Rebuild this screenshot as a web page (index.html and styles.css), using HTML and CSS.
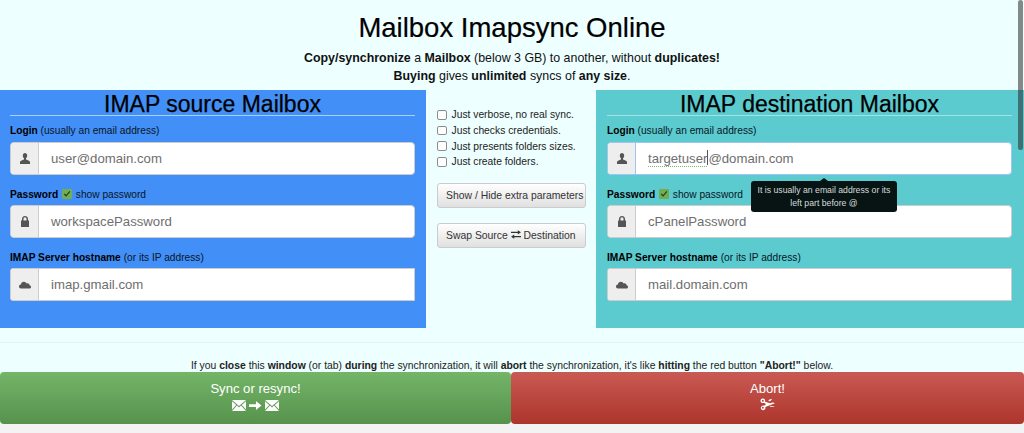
FILE: index.html
```html
<!DOCTYPE html>
<html lang="en">
  <head>
    <meta charset="UTF-8" />
    <meta name="viewport" content="width=device-width, initial-scale=1.0" />
    <title>Mailbox Imapsync Online</title>
    <link rel="stylesheet" href="styles.css">
  </head>

  <body>
    <svg class="defs" width="0" height="0">
      <symbol id="i-user" viewBox="0 0 12 12"><path d="M3.800 2.400C3.800 1 4.800 0 6 0s2.200 1 2.200 2.400c0 1.200-.5 2.300-1.200 2.900v1c0 .6 4 1.100 4 3V11H1V9.300c0-1.900 4-2.400 4-3v-1C4.300 4.700 3.800 3.600 3.800 2.400z"/></symbol>
      <symbol id="i-lock" viewBox="0 0 12 12"><path d="M6 0C4 0 3 1.400 3 3v1.600H2v6.400h8V4.600H9V3C9 1.400 8 0 6 0zm0 1.300c1 0 1.500.7 1.500 1.700v1.600h-3V3c0-1 .5-1.700 1.500-1.700z"/></symbol>
      <symbol id="i-cloud" viewBox="0 0 12 12"><path d="M1.900 9.500C.8 9.500 0 8.600 0 7.500s.8-1.900 1.800-2C2.100 4 3.300 2.800 4.900 2.800c1.200 0 2.200.7 2.700 1.700.3-.1.600-.2.900-.2 1.100 0 2 .8 2.100 1.900.8.200 1.400.9 1.400 1.700 0 1-.8 1.600-1.700 1.600z"/></symbol>
      <symbol id="i-mail" viewBox="0 0 14 11"><path d="M0 0h14L7 6zM0 1.300V9.400l4.200-4.500zM14 1.300V9.400L9.800 4.900zM5 5.600l2 1.800 2-1.800 5 5.400H0z"/></symbol>
      <symbol id="i-arrow" viewBox="0 0 14 12"><path d="M0 4.500h7.500V1L13.500 6l-6 5V7.500H0z"/></symbol>
      <symbol id="i-cut" viewBox="0 0 16 14"><path fill-rule="evenodd" d="M3 .5a2.500 2.500 0 1 0 1.300 4.600L6.500 6.600 4.300 8.400A2.500 2.500 0 1 0 5.600 9.700L16 5.600c-1.500-.9-3.300-.8-5 0L5.300 4A2.500 2.500 0 0 0 3 .5zm0 1.500a1 1 0 1 1 0 2 1 1 0 0 1 0-2zm0 7.500a1 1 0 1 1 0 2 1 1 0 0 1 0-2z"/><path d="M9.500 2L13 .8 11 3.500 9 3.200zM10.500 8.300l5.500.8c-1.500.7-3.500.7-5.500 0z"/></symbol>
      <symbol id="i-swap" viewBox="0 0 14 12"><path d="M9.500 0L14 3 9.500 6V4H0V2h9.500zM4.500 6v2H14v2H4.500v2L0 9z"/></symbol>
      <symbol id="i-check" viewBox="0 0 10 10"><path d="M1.800 5.300l.9-.9 1.400 1.500L7.500 2l.8.700-4.200 5z"/></symbol>
    </svg>

    <div class="head">
      <h1 class="title">Mailbox Imapsync Online</h1>
      <p class="intro"><b>Copy/synchronize</b> a <b>Mailbox</b> (below 3 GB) to another, without <b>duplicates!</b><br /><b>Buying</b> gives <b>unlimited</b> syncs of <b>any size</b>.</p>
    </div>

    <div class="columns">
      <div class="panel source">
        <h2 class="panel-title">IMAP source Mailbox</h2>

        <label class="lbl first"><b>Login</b> (usually an email address)</label>
        <div class="group">
          <span class="addon"><svg class="ico"><use href="#i-user"/></svg></span>
          <input class="field" type="text" value="user@domain.com" />
        </div>

        <label class="lbl"><b>Password</b> <span class="tick"><svg><use href="#i-check"/></svg></span> show password</label>
        <div class="group">
          <span class="addon"><svg class="ico"><use href="#i-lock"/></svg></span>
          <input class="field" type="text" value="workspacePassword" />
        </div>

        <label class="lbl"><b>IMAP Server hostname</b> (or its IP address)</label>
        <div class="group square">
          <span class="addon"><svg class="ico"><use href="#i-cloud"/></svg></span>
          <input class="field" type="text" value="imap.gmail.com" />
        </div>
      </div>

      <div class="middle">
        <label class="opt"><input type="checkbox" /> Just verbose, no real sync.</label>
        <label class="opt"><input type="checkbox" /> Just checks credentials.</label>
        <label class="opt"><input type="checkbox" /> Just presents folders sizes.</label>
        <label class="opt"><input type="checkbox" /> Just create folders.</label>
        <button class="btn btn-first">Show / Hide extra parameters</button>
        <button class="btn">Swap Source <svg class="swap"><use href="#i-swap"/></svg> Destination</button>
      </div>

      <div class="panel dest">
        <h2 class="panel-title">IMAP destination Mailbox</h2>

        <label class="lbl first"><b>Login</b> (usually an email address)</label>
        <div class="group focused">
          <span class="addon"><svg class="ico"><use href="#i-user"/></svg></span>
          <div class="field"><span class="typo">targetuser</span><span class="caret"></span>@domain.com</div>
          <div class="tooltip">It is usually an email address or its left part before @</div>
        </div>

        <label class="lbl"><b>Password</b> <span class="tick"><svg><use href="#i-check"/></svg></span> show password</label>
        <div class="group">
          <span class="addon"><svg class="ico"><use href="#i-lock"/></svg></span>
          <input class="field" type="text" value="cPanelPassword" />
        </div>

        <label class="lbl"><b>IMAP Server hostname</b> (or its IP address)</label>
        <div class="group square">
          <span class="addon"><svg class="ico"><use href="#i-cloud"/></svg></span>
          <input class="field" type="text" value="mail.domain.com" />
        </div>
      </div>
    </div>

    <hr class="rule" />

    <p class="warning">If you <b>close</b> this <b>window</b> (or tab) <b>during</b> the synchronization, it will <b>abort</b> the synchronization, it's like <b>hitting</b> the red button <b>"Abort!"</b> below.</p>

    <div class="actions">
      <button class="action sync">Sync or resync!<br /><span class="glyphs"><svg class="mail"><use href="#i-mail"/></svg><svg class="arrow"><use href="#i-arrow"/></svg><svg class="mail"><use href="#i-mail"/></svg></span></button>
      <button class="action abort">Abort!<br /><span class="glyphs"><svg class="cut"><use href="#i-cut"/></svg></span></button>
    </div>

    <div class="scrollthumb"></div>
  </body>
</html>
```

FILE: styles.css
```css
* {
  box-sizing: border-box;
}

html, body {
  overflow: hidden;
}

body {
  margin: 0;
  height: 433px;
  background-color: #f3f3f3;
  font-family: "Liberation Sans", Arial, sans-serif;
  font-size: 11px;
  color: #111;
  position: relative;
}

.defs {
  position: absolute;
}

.head {
  background-color: #edffff;
  height: 90px;
  text-align: center;
  padding-top: 12px;
}

.title {
  margin: 0;
  font-size: 27.500px;
  font-weight: normal;
  line-height: 31px;
  color: #000;
  -webkit-text-stroke: 0.2px #000;
}

.intro {
  margin: 6px 0 0;
  font-size: 12.400px;
  line-height: 18px;
}

.columns {
  display: grid;
  grid-template-columns: 426px 170px 428px;
  height: 238px;
  background-color: #edffff;
}

.panel {
  padding: 0 11px 0 10px;
}

.source {
  background-color: #428ff7;
}

.dest {
  background-color: #5bcbd0;
  padding: 0 12px 0 11px;
}

.panel-title {
  margin: 0;
  height: 26px;
  font-size: 23px;
  line-height: 28px;
  font-weight: normal;
  text-align: center;
  color: #000;
  border-bottom: 1px solid #a9d0fb;
  -webkit-text-stroke: 0.25px #000;
}

.dest .panel-title {
  border-bottom-color: #a5e2e6;
}

.lbl {
  display: block;
  height: 15px;
  margin-top: 12px;
  margin-bottom: 3px;
  font-size: 10.200px;
  line-height: 15px;
  color: #0a1626;
}

.lbl b {
  color: #000;
}

.lbl.first {
  margin-top: 7px;
  margin-bottom: 4px;
}

.tick {
  display: inline-block;
  width: 10px;
  height: 10px;
  margin: 0 1px;
  vertical-align: -1px;
  background-color: #74ac52;
  border-radius: 1px;
}

.tick svg {
  display: block;
  width: 10px;
  height: 10px;
  fill: #1e3d1a;
}

.group {
  display: flex;
  height: 33px;
  position: relative;
  border: 1px solid #ccc;
  border-radius: 4px;
  background: #fff;
}

.group.square {
  border-radius: 3px 0 0 3px;
}

.group.focused {
  border-color: #9ec6ee;
}

.addon {
  display: flex;
  flex: 0 0 28px;
  align-items: center;
  justify-content: center;
  background-color: #eee;
  border-right: 1px solid #ccc;
  border-radius: 3px 0 0 3px;
}

.focused .addon {
  border-right-color: #9ec6ee;
}

.ico {
  width: 12px;
  height: 12px;
  fill: #555;
}

.field {
  flex: 1;
  min-width: 0;
  border: none;
  outline: none;
  background: transparent;
  padding: 0 12px;
  font-family: inherit;
  font-size: 13.200px;
  color: #6e6e6e;
  line-height: 31px;
}

.typo {
  border-bottom: 1px dotted #6fbf6a;
}

.caret {
  display: inline-block;
  width: 1px;
  height: 15px;
  background-color: #555;
  vertical-align: -2px;
}

.tooltip {
  position: absolute;
  z-index: 2;
  left: 143px;
  top: 38px;
  width: 146px;
  padding: 3px 5px 3px;
  background-color: #071413;
  border-radius: 3px;
  color: #d5dcdc;
  font-size: 8.700px;
  line-height: 12.500px;
  text-align: center;
}

.tooltip::before {
  content: "";
  position: absolute;
  left: 69px;
  top: -3px;
  border-left: 4px solid transparent;
  border-right: 4px solid transparent;
  border-bottom: 3px solid #071413;
}

.middle {
  display: flex;
  flex-direction: column;
  padding: 17px 11px 0;
  align-items: flex-start;
  font-size: 10.300px;
  color: #222;
}

.opt {
  display: flex;
  align-items: center;
  gap: 5px;
  height: 15.700px;
}

.opt input {
  appearance: none;
  margin: 0;
  width: 9.500px;
  height: 9.500px;
  background: #fff;
  border: 1px solid #8d8d8d;
  border-radius: 2px;
}

.btn {
  display: block;
  width: 149px;
  height: 25px;
  margin-top: 15px;
  padding: 0 0 0 8px;
  font-family: inherit;
  font-size: 10.400px;
  color: #333;
  text-align: left;
  border: 1px solid #ccc;
  border-radius: 3px;
  background: linear-gradient(#fff, #e0e0e0);
  white-space: nowrap;
}

.btn-first {
  margin-top: 13px;
}

.swap {
  width: 10px;
  height: 9px;
  fill: #333;
  vertical-align: 0;
}

.rule {
  margin: 0;
  height: 27px;
  padding: 0;
  border: none;
  background: linear-gradient(#edffff 14px, #e3f3f3 14px, #e3f3f3 15px, #edffff 15px);
  background-color: #edffff;
}

.warning {
  margin: 0;
  height: 17px;
  padding-top: 4px;
  background-color: #edffff;
  text-align: center;
  font-size: 10.380px;
  line-height: 13px;
  color: #222;
}

.actions {
  display: grid;
  grid-template-columns: 511px 513px;
  height: 52px;
  background-color: #edffff;
}

.action {
  margin: 0;
  padding: 0;
  border: none;
  border-radius: 4px;
  font-family: inherit;
  font-size: 13.100px;
  line-height: 18px;
  color: #fff;
  height: 52px;
}

.sync {
  background: linear-gradient(#74b568, #56924c);
}

.abort {
  background: linear-gradient(#c95a53, #ad352c);
}

.glyphs {
  display: inline-flex;
  align-items: center;
  gap: 3px;
  height: 14px;
}

.mail {
  width: 14px;
  height: 11px;
  fill: #fff;
}

.arrow {
  width: 13px;
  height: 11px;
  fill: #fff;
}

.cut {
  width: 15px;
  height: 13px;
  fill: #fff;
}

.scrollthumb {
  position: absolute;
  right: 1px;
  top: 0;
  width: 5px;
  height: 150px;
  border-radius: 3px;
  background-color: rgba(40, 40, 40, 0.55);
}
```
